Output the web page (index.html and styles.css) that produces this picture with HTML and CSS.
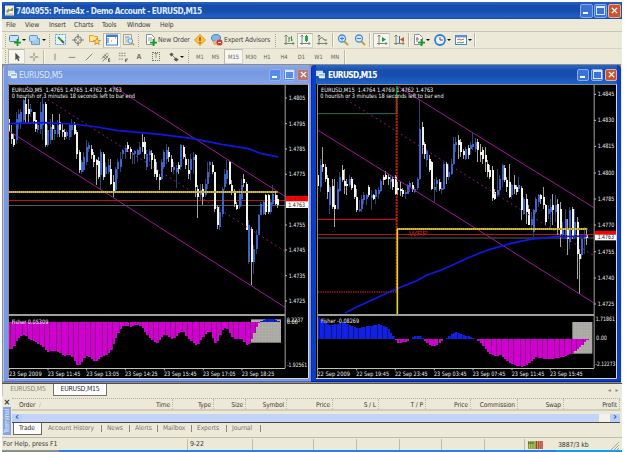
FILE: index.html
```html
<!DOCTYPE html>
<html lang="en">
<head>
<meta charset="utf-8">
<title>7404955: Prime4x - Demo Account - EURUSD,M15</title>
<link rel="stylesheet" href="styles.css">
</head>
<body>
<svg class="defs" width="0" height="0">
  <defs>
    <pattern id="gold" width="6" height="6" patternUnits="userSpaceOnUse"><rect width="6" height="6" fill="#d9c32e"/><rect width="3" height="6" fill="#ad9c28"/></pattern>
    <pattern id="dots" width="9" height="9" patternUnits="userSpaceOnUse"><rect width="9" height="9" fill="#aaa9a3"/><rect x="3" y="3" width="3" height="3" fill="#b8b6ac"/></pattern>
    <symbol id="plus" viewBox="0 0 8 8"><path d="M3 0h2v3h3v2H5v3H3V5H0V3h3z" fill="#189a20"/></symbol>
    <symbol id="win" viewBox="0 0 12 12"><rect x=".5" y="1.5" width="8" height="6" fill="#bcd8f5" stroke="#e8f2ff"/><path d="M3.5 4.500h8v6h-7z" fill="#dceaff" stroke="#fff"/><path d="M4 6.500h7" stroke="#3f75cf"/></symbol>
    <symbol id="axes" viewBox="0 0 12 12"><path d="M3 1v10M1 9.500h10M1.500 2.500 3 1l1.500 1.500M9.500 8l1.500 1.500L9.500 11" fill="none" stroke="#6d7a72" stroke-width=".9"/></symbol>
    <symbol id="lens" viewBox="0 0 12 12"><path d="m7 7 4 4" stroke="#c9a034" stroke-width="2"/><circle cx="5" cy="4.500" r="3.500" fill="#d5eafb" stroke="#4c8fdb" stroke-width="1.300"/></symbol>
  </defs>
</svg>
<div class="app">
  <header class="titlebar">
    <svg class="logo" viewBox="0 0 10 11"><rect width="10" height="11" fill="#f4f2dc"/><path d="M1 7 4 3l1 2 4-3v4H5L3 8z" fill="#889279"/><path d="M1 9.500h8" stroke="#bba963"/></svg>
    <h1>7404955: Prime4x - Demo Account - EURUSD,M15</h1>
    <div class="controls"><i class="min"></i><i class="max"></i><i class="close"><svg viewBox="0 0 8 8"><path d="m1 1 6 6M7 1 1 7"/></svg></i></div>
  </header>
  <nav class="menu"><span>File</span><span>View</span><span>Insert</span><span>Charts</span><span>Tools</span><span>Window</span><span>Help</span></nav>

  <div class="toolbar main">
    <i class="grip"></i>
    <b class="drop"><svg viewBox="0 0 12 12"><rect x=".5" y="1.500" width="9" height="6" rx="1" fill="#cce2fa" stroke="#4c83c4"/><use href="#plus" x="5" y="5" width="7" height="7"/></svg></b>
    <b class="drop"><svg viewBox="0 0 12 12"><rect x=".5" y="1.500" width="8" height="6" rx="1" fill="#b8d8f5" stroke="#5b93cf"/><path d="M2.500 8v2.500h8V4.500H9" fill="#a0c9ee" stroke="#6b9cce"/></svg></b>
    <i class="grip"></i>
    <b><svg viewBox="0 0 12 12"><rect x=".5" y=".5" width="10" height="10" fill="#e8f4fb" stroke="#5aa0d4" stroke-dasharray="2 1"/><path d="m3 3 3 3" stroke="#2ba82e" stroke-width="2"/><path d="m6 6 3 3" stroke="#4b6046" stroke-width="2"/></svg></b>
    <b><svg viewBox="0 0 12 12"><circle cx="6" cy="6" r="3.500" fill="none" stroke="#777b74"/><path d="M6 0v5M6 7v5M0 6h5M7 6h5" stroke="#777b74"/></svg></b>
    <b><svg viewBox="0 0 12 12"><path d="M.5 1.500h4l1 1h3v5h-8z" fill="#ffe68b" stroke="#d3a23e"/><path d="m8 4 1 2.300 2.500.2-2 1.500.7 2.500L8 9.200l-2.200 1.300.7-2.500-2-1.500L7 6.300z" fill="#ffd84f" stroke="#c8882a" stroke-width=".8"/></svg></b>
    <b class="pressed"><svg viewBox="0 0 12 12"><rect x=".5" y="1" width="11" height="10" fill="#fff" stroke="#437ccb"/><path d="M1 2h10" stroke="#437ccb" stroke-width="2"/><path d="M2 4v5" stroke="#8fb6e8" stroke-width="2"/><path d="M9 4h1M5 7h1" stroke="#d26c55"/></svg></b>
    <b><svg viewBox="0 0 12 12"><path d="M.5.5h8v10h-8z" fill="#f3f1e2" stroke="#a4a18c"/><path d="M2 3h5M3 2v7M5 2v7" stroke="#809cb9" stroke-width=".7"/><use href="#lens" x="4" y="4" width="8" height="8"/></svg></b>
    <i class="grip"></i>
    <b class="label"><svg viewBox="0 0 12 12"><path d="M1.500.5h5l3 3v7h-8z" fill="#fff" stroke="#87939a"/><path d="M3 4h4M3 6h4" stroke="#999"/><use href="#plus" x="5" y="5" width="7" height="7"/></svg><span class="order-label">New Order</span></b>
    <b><svg viewBox="0 0 12 12"><path d="m6 .5 5.500 5.500L6 11.500.5 6z" fill="#f6c043" stroke="#dc9a2b"/><path d="M6 3v4M6 8v1.500" stroke="#9a5510" stroke-width="1.500"/></svg></b>
    <b class="label"><svg viewBox="0 0 12 12"><ellipse cx="5" cy="4" rx="4.500" ry="3.500" fill="#82b6e9" stroke="#4a82c1"/><path d="M1 7h9l-2 4H3z" fill="#e9ba54"/><circle cx="8.500" cy="8.500" r="3" fill="#d63a2e"/><path d="M7 8.500h3" stroke="#fff"/></svg><span class="expert-label">Expert Advisors</span></b>
    <i class="grip"></i>
    <b><svg viewBox="0 0 12 12"><use href="#axes"/><path d="M6 3v5M6 4h1.500M8.500 2v5M8.500 6H10" stroke="#4b8a5c"/></svg></b>
    <b class="pressed"><svg viewBox="0 0 12 12"><use href="#axes"/><path d="M7.500 1v7" stroke="#27793c"/><path d="M6 2h3v5H6z" fill="#2ba64a"/></svg></b>
    <b><svg viewBox="0 0 12 12"><use href="#axes"/><path d="M3 6c3-4 4-2 5 0h3" fill="none" stroke="#56665e"/></svg></b>
    <i class="sep"></i>
    <b><svg viewBox="0 0 12 12"><use href="#lens"/><path d="M3 4.500h4M5 2.500v4" stroke="#397bc8"/></svg></b>
    <b><svg viewBox="0 0 12 12"><use href="#lens"/><path d="M3 4.500h4" stroke="#397bc8"/></svg></b>
    <i class="sep"></i>
    <b class="pressed"><svg viewBox="0 0 12 12"><use href="#axes"/><path d="m6 3 4 2.500L6 8z" fill="#209547"/></svg></b>
    <b><svg viewBox="0 0 12 12"><use href="#axes"/><path d="M6.500 2v7" stroke="#3878b8"/><path d="m11 3-4 2.500L11 8z" fill="#ce4e31"/></svg></b>
    <i class="sep"></i>
    <b class="drop"><svg viewBox="0 0 12 12"><path d="M1.500.5h5l3 3v7h-8z" fill="#fff" stroke="#87939a"/><path d="M4 3v5M3 5h3" stroke="#777"/><use href="#plus" x="5" y="5" width="7" height="7"/></svg></b>
    <b class="drop"><svg viewBox="0 0 12 12"><circle cx="6" cy="6" r="5" fill="#e6f3ff" stroke="#367cd1" stroke-width="1.800"/><path d="M6 3v3h3" fill="none" stroke="#555"/></svg></b>
    <b class="drop"><svg viewBox="0 0 12 12"><rect x=".5" y="1.500" width="11" height="9" fill="#fff" stroke="#4d88c9"/><path d="M1 2.500h10" stroke="#5c99dc" stroke-width="2"/><path d="m2 6 2-1 2 1 3-1" fill="none" stroke="#bd624c"/><path d="m2 9 2-1 2 1 3-1" fill="none" stroke="#52995b"/></svg></b>
    <i class="sep"></i>
  </div>

  <div class="toolbar draw">
    <i class="grip"></i>
    <b class="pressed"><svg viewBox="0 0 12 12"><path d="M4 1v9l2-2 1.500 3 1.500-1-1.500-3H10z" fill="#4f4f4c"/></svg></b>
    <b><svg viewBox="0 0 12 12"><path d="M6 1v4M6 7v4M1 6h4M7 6h4" stroke="#696964"/></svg></b>
    <i class="sep"></i>
    <b><svg viewBox="0 0 12 12"><path d="M6 2v8" stroke="#777770"/></svg></b>
    <b><svg viewBox="0 0 12 12"><path d="M2 6.500h8" stroke="#777770"/></svg></b>
    <b><svg viewBox="0 0 12 12"><path d="m2 10 8-8" stroke="#777770"/></svg></b>
    <b><svg viewBox="0 0 12 12"><path d="m1 8 7-7M2 11l7-7M2 5l5 4M4 3l4 4" stroke="#66665f"/><path d="M11 8H9v3.500h2M9 9.700h2" fill="none" stroke="#555"/></svg></b>
    <b><svg viewBox="0 0 12 12"><path d="M1 1.500h9M1 4.500h9M1 8.500h6" stroke="#73736c" stroke-dasharray="2 1"/><path d="M9 12V8.500h3M9 10.500h2" fill="none" stroke="#555"/></svg></b>
    <b class="letter">A</b>
    <b><span class="textbox">T</span></b>
    <b class="drop"><svg viewBox="0 0 12 12"><path d="m1 3 2-2 2 2-2 2zM4 4l4 4M6 9l2-2 3 2-2 2z" fill="#555" stroke="#555" stroke-width=".8"/></svg></b>
    <i class="grip"></i>
    <b>M1</b><b>M5</b><b class="pressed">M15</b><b>M30</b><b>H1</b><b>H4</b><b>D1</b><b>W1</b><b>MN</b>
    <i class="sep"></i>
  </div>

  <main class="workspace">
    <section class="chart-window inactive">
      <div class="chart-title"><svg viewBox="0 0 12 12"><use href="#win"/></svg><h2>EURUSD,M5</h2><div class="controls"><i class="min"></i><i class="max"></i><i class="close"><svg viewBox="0 0 8 8"><path d="m1 1 6 6M7 1 1 7"/></svg></i></div></div>
      <svg class="chart" id="m5" viewBox="24 66 903 885"></svg>
    </section>
    <section class="chart-window active">
      <div class="chart-title"><svg viewBox="0 0 12 12"><use href="#win"/></svg><h2>EURUSD,M15</h2><div class="controls"><i class="min"></i><i class="max"></i><i class="close"><svg viewBox="0 0 8 8"><path d="m1 1 6 6M7 1 1 7"/></svg></i></div></div>
      <svg class="chart" id="m15" viewBox="18 66 903 885"></svg>
    </section>
  </main>

  <div class="chart-tabs"><span>EURUSD,M5</span><span class="on">EURUSD,M15</span><em>◂</em><em>▸</em></div>

  <section class="terminal">
    <aside><span class="x">×</span><span class="name">Terminal</span></aside>
    <div class="panel">
      <div class="columns"><span>Order &nbsp;<small>∕</small></span><span>Time</span><span>Type</span><span>Size</span><span>Symbol</span><span>Price</span><span>S / L</span><span>T / P</span><span>Price</span><span>Commission</span><span>Swap</span><span>Profit</span></div>
      <div class="scroll"><i>‹</i><span></span><i>›</i></div>
      <div class="panel-tabs"><span class="on">Trade</span><span>Account History</span><span>News</span><span>Alerts</span><span>Mailbox</span><span>Experts</span><span>Journal</span></div>
    </div>
  </section>

  <footer class="status">
    <span>For Help, press F1</span><span>9-22</span><span></span><span></span><span></span><span></span><span></span><span></span>
    <span class="traffic"><svg viewBox="0 0 15 8"><path d="M0 4h8" stroke="#7c9a23" stroke-width="8" stroke-dasharray="1.500 .6"/><path d="M8 4h7" stroke="#ad3b20" stroke-width="8" stroke-dasharray="1.500 .6"/><path d="M0 2h6" stroke="#4c5b16"/></svg>3887/3 kb</span>
    <svg class="resize" viewBox="0 0 8 8"><path d="M0 8 8 0M3 8l5-5M6 8l2-2" stroke="#aaa696"/></svg>
  </footer>
</div>
<div class="desktop"><i></i><i></i><i></i></div>
<script src="charts.js"></script>
</body>
</html>
```
FILE: styles.css
```css
* { box-sizing: border-box; }
body { margin: 0; width: 625px; height: 452px; overflow: hidden; background: #fff; font: 6.6px "DejaVu Sans Condensed", "Noto Sans", sans-serif; color: #3c3b36; }
h1, h2 { margin: 0; font-weight: normal; }
i, em, b { font-style: normal; font-weight: normal; }
.defs { display: block; height: 0; }
.app { margin: 2px 3px 0 2px; width: 620px; height: 448px; display: flex; flex-direction: column; background: #ece9d8; white-space: nowrap; }

.titlebar { height: 17px; display: flex; align-items: center; padding: 0 1px 0 3px; color: #fff; background: linear-gradient(#2b66c5, #174eae 20%, #174eae 55%, #2260c4 85%, #174ba6); }
.logo { width: 9px; height: 11px; }
.titlebar h1 { margin-left: 2px; font: bold 8.3px "DejaVu Sans Condensed", sans-serif; letter-spacing: -.53px; color: #dfe9ff; }
.controls { display: flex; gap: 2px; margin-left: auto; }
.controls i { width: 12px; height: 12px; border: 1px solid #86abeb; border-radius: 2px; background: #3b72d8; display: flex; align-items: center; justify-content: center; }
.titlebar .controls i { height: 14px; width: 13px; }
.titlebar .controls { gap: 1px; }
.min::after { content: ""; width: 5px; height: 2px; background: #fff; margin: 5px 2px 0 0; }
.max::after { content: ""; width: 7px; height: 6px; border: 1px solid #dce8ff; border-top-width: 2px; }
.controls .close { background: #cc5330; border-color: #e0b0a0; }
.close svg { width: 7px; height: 7px; stroke: #fff; stroke-width: 1.6; }

.menu { height: 12px; display: flex; align-items: center; padding-left: 4px; font-size: 6.9px; letter-spacing: -.15px; }
.menu span:nth-child(1) { width: 19px; }
.menu span:nth-child(2) { width: 24px; }
.menu span:nth-child(3) { width: 25px; }
.menu span:nth-child(4) { width: 28px; }
.menu span:nth-child(5) { width: 25px; }
.menu span:nth-child(6) { width: 33px; }

.toolbar { display: grid; padding-left: 2px; height: 16px; align-items: center; border-top: 1px solid #c9c5b2; }
.main { height: 17px; grid-template-columns: 4px 19px 21px 4px 18px 16px 17px 18px 16px 5px 50px 16px 66px 6px 17px 16px 18px 4px 16px 17px 5px 17px 17px 4px 20px 22px 20px 4px; }
.draw { border-top-color: #d8d4c3; font-size: 5.8px; color: #66655e; grid-template-columns: 4px 17px 17px 4px 17px 17px 17px 17px 17px 16px 18px 22px 6px 14px 17px 19px 16px 16px 18px 17px 17px 16px 3px; }
.toolbar b { height: 15px; display: flex; align-items: center; justify-content: center; }
.toolbar b > svg { width: 12px; height: 12px; flex: none; }
.draw b > svg { width: 10px; height: 10px; }
.toolbar .grip { height: 13px; width: 2px; margin-left: 1px; border-left: 1px dotted #aaa692; }
.toolbar .sep { height: 14px; width: 2px; margin-left: 1px; border-left: 1px solid #bdb9a6; border-right: 1px solid #faf8ee; }
.toolbar .pressed { background: #f6f5ef; border: 1px solid #d6d3c5; border-top-color: #bdb9a9; border-left-color: #bdb9a9; }
.drop::after { content: ""; border: 2px solid transparent; border-top-color: #111; border-bottom: 0; margin-left: 1px; }
.toolbar .label { justify-content: flex-start; padding-left: 3px; gap: 1px; color: #45443e; font-size: 6.9px; }
.order-label { letter-spacing: -.15px; }
.expert-label { letter-spacing: -.17px; }
.toolbar .letter { font-size: 7px; font-weight: bold; color: #77756c; }
.textbox { border: 1px dotted #77756c; width: 8px; height: 9px; line-height: 7px; text-align: center; font-size: 7px; }

.workspace { height: 320px; display: flex; padding: 1px 0 0 1px; background: #8c8c86; border-bottom: 1px solid #4f5054; box-shadow: inset -1px 0 #ece9d8; }
.chart-window { width: 308px; padding: 0 2px 2px 4px; height: 317px; border-radius: 4px 4px 0 0; }
.inactive { background: #7a98e3; border-left: 1px solid #b4c6ef; border-bottom: 1px solid #5265c3; }
.active { width: 310px; padding-right: 4px; background: #0b3fc1; border-left: 1px solid #0c27bc; border-bottom: 1px solid #061cb0; }
.chart-title { height: 19px; display: flex; align-items: center; color: #fff; }
.inactive .chart-title { color: #dce7ff; background: linear-gradient(#8ba9ea, #7698e0 35%, #82a4ea); }
.active .chart-title { background: linear-gradient(#2767cd, #174eae 30%, #174eae 55%, #2262cb); }
.chart-title > svg { width: 9px; height: 9px; }
.chart-title h2 { margin-left: 2px; font-size: 8.5px; letter-spacing: -.25px; }
.active h2 { margin-left: 3px; font-size: 8.3px; font-weight: bold; letter-spacing: -.65px; }
.inactive .controls i { border-color: #92b0ef; background: #588aea; }
.inactive .controls .close { background: #b9746d; border-color: #a7a5c9; }
.chart { display: block; width: 301px; height: 295px; background: #000; border: 0; }
.chart text { font-family: "DejaVu Sans Condensed", "Noto Sans", sans-serif; font-size: 18px; fill: #efefef; }
.chart .onwhite { fill: #111; }
.chart .dim { fill: #a01818; }
.chart .pivot { fill: #d3171c; font-family: "Liberation Sans", sans-serif; font-size: 23px; }

.chart-tabs { height: 14px; display: flex; font-size: 6.9px; letter-spacing: -.22px; line-height: 11px; color: #8a887c; }
.chart-tabs span { width: 51px; height: 12px; text-align: center; border-left: 1px solid #c7c4b5; }
.chart-tabs .on { width: 54px; background: #fff; color: #33322e; border: 1px solid #77756b; border-top: 0; }
.chart-tabs em { font-size: 6px; margin-left: 5px; }
.chart-tabs span + em { margin-left: auto; }
.chart-tabs em:last-child { margin-right: 4px; }

.terminal { height: 39px; display: flex; }
aside { width: 10px; display: flex; flex-direction: column; align-items: center; }
.x { height: 9px; line-height: 9px; font-size: 9px; font-weight: bold; color: #333; }
.name { height: 28px; width: 8px; line-height: 8px; writing-mode: vertical-rl; transform: rotate(180deg); background: #83a6df; color: #dce8fb; text-align: center; font-size: 7px; letter-spacing: -.3px; }
.panel { width: 610px; padding-right: 2px; }
.columns { height: 13px; display: grid; grid-template-columns: 59px 102px 41px 32px 41px 46px 46px 47px 45px 47px 46px 56px; line-height: 12px; border-top: 1px dotted #b3b09e; border-bottom: 2px solid #d0cdb9; letter-spacing: -.1px; }
.columns span { text-align: right; padding-right: 2px; height: 10px; border-right: 1px dotted #bdb9a8; }
.columns span:first-child { text-align: left; padding-left: 7px; border-color: transparent; }
.columns small { color: #aaa798; font-size: 6px; }
.scroll { display: flex; height: 9px; margin-top: 3px; border-bottom: 1px solid #4b4a45; background: #c3d4f8; }
.scroll i { width: 10px; line-height: 6px; font-size: 11px; font-weight: bold; text-align: center; color: #3d5da0; background: #bad0fa; }
.scroll span { flex: 1; border-right: 11px solid #f3f2ea; }
.panel-tabs { height: 13px; display: flex; padding-left: 1px; line-height: 11px; letter-spacing: -.07px; color: #77756b; }
.panel-tabs span { border-right: 1px solid #8b897e; height: 7px; margin-top: 2px; line-height: 7px; padding-left: 5px; width: 28px; }
.panel-tabs .on { width: 29px; height: 12px; margin-top: 0; line-height: 10px; background: #fff; color: #33322e; border: 1px solid #6b6961; border-top: 0; }
.panel-tabs span:nth-child(2) { width: 60px; padding-left: 6px; }
.panel-tabs span:nth-child(5) { width: 34px; }
.panel-tabs span:nth-child(6) { width: 35px; }
.panel-tabs span:nth-child(7) { width: 34px; }

.status { height: 13px; display: grid; grid-template-columns: 185px 65px 61px 43px 43px 42px 43px 40px 87px 9px; border-top: 1px solid #c0bcaa; padding-top: 1px; line-height: 10px; font-size: 6.9px; letter-spacing: -.08px; }
.status span { border-left: 1px solid #c0bcaa; padding-left: 2px; }
.status span:first-child { border: 0; padding-left: 1px; }
.status .traffic { display: flex; gap: 15px; align-items: center; }
.traffic svg { width: 15px; height: 8px; margin-left: 1px; }
.resize { width: 8px; height: 8px; align-self: end; }
.desktop { height: 2px; margin-left: 2px; width: 620px; display: flex; background: #2b80e6; }
.desktop i:nth-child(1) { width: 57px; background: #85918c; }
.desktop i:nth-child(2) { width: 497px; }
.desktop i:nth-child(3) { flex: 1; background: #13a0e8; }
```
FILE: charts.js
```javascript
// Chart coordinates are thirds of a pixel. Bars: high, body top, body bottom, low, colour.
const STEP = 7.27;
const snap = v => Math.round(v / 3) * 3;

function bars(text, x0) {
  return text.trim().split(/\s+/).map((bar, i) => {
    const m = bar.match(/^(\d+),(\d+),(\d+),(\d+)([wb])$/);
    const [h, t, b, l] = m.slice(1, 5).map(v => snap(+v));
    const up = m[5] === 'b';
    const x = snap(x0 + i * STEP);
    return `<path d="M${x + 1.5} ${h}V${l}" stroke="${up ? '#2b4670' : '#a5a59e'}" stroke-width="3"/>` +
      `<rect x="${x}" y="${t}" width="6" height="${Math.max(3, b - t)}" fill="${up ? '#3d63cc' : '#f4f4ee'}"/>`;
  }).join('');
}

function histogram(points, x0, zero) {
  let out = '';
  for (let i = 0; i < 112; i++) {
    const x = x0 + i * STEP;
    let k = 0;
    while (k < points.length - 2 && points[k + 1][0] < x) k++;
    const [a, b] = [points[k], points[k + 1]];
    const f = Math.min(1, Math.max(0, (x - a[0]) / (b[0] - a[0])));
    const y = snap(a[1] + (b[1] - a[1]) * f);
    const up = y < zero;
    out += `<rect x="${snap(x)}" y="${Math.min(y, zero)}" width="6" height="${Math.abs(y - zero)}" fill="${up ? '#1220e0' : '#d000d0'}"/>`;
    if (snap(x + STEP) - snap(x) > 6) {
      out += `<rect x="${snap(x) + 6}" y="${Math.min(y, zero)}" width="3" height="${Math.abs(y - zero)}" fill="${up ? '#0a1290' : '#8a1684'}"/>`;
    }
  }
  return out;
}

const line = (pts, color, w = 3, extra = '') => `<polyline points="${pts}" fill="none" stroke="${color}" stroke-width="${w}" ${extra}/>`;
const text = (x, y, s, w, cls = '') => `<text x="${x}" y="${y + 6}" ${w ? `textLength="${w}" lengthAdjust="spacingAndGlyphs"` : ''} class="${cls}">${s}</text>`;
const dash = 'stroke-dasharray="5 10"';

function frame(x, right, bottomLabels, prices) {
  let out = line(`${x - 1.5},951 ${x - 1.5},67.5 ${x + 900},67.5`, '#8e8e88');
  out += line(`${right + .5},69 ${right + .5},919`, '#a0a09a');
  out += `<rect x="${x}" y="756" width="${right - x}" height="6" fill="#a0a09a"/>`;
  out += line(`${x},919.5 ${right},919.5`, '#c0c0ba');
  prices.forEach(([y, s]) => { out += line(`${right},${y} ${right + 6},${y}`, '#bbb') + text(right + 11, y, s, 50); });
  bottomLabels.forEach(([lx, s]) => { out += line(`${lx + 1},919 ${lx + 1},925`, '#bbb') + text(lx, 937, s, 98); });
  return out;
}

const m5 = `120,170,210,235w 190,215,232,245w 215,230,248,255w 150,170,235,245b 140,155,185,200b 140,150,180,200b 110,115,175,185b 105,125,155,185w 110,140,155,185w 125,140,150,165b
150,150,178,185w 150,175,200,210w 180,188,205,212b 120,150,200,215b 105,125,190,235b 120,125,248,255w 190,205,250,255b 170,195,235,245b 155,190,200,235w 190,205,215,235b
175,190,215,225b 155,180,205,225w 185,205,210,225w 200,210,225,235w 205,210,222,232b 185,190,225,235b 170,190,205,225b 180,188,215,220w 205,210,275,290w 265,270,325,333w
295,300,330,335b 270,285,325,330b 235,255,300,310b 240,250,262,270b 250,262,280,290w 270,280,300,315w 290,295,310,370w 285,298,345,350w 260,270,340,380b 270,275,345,355w
300,315,335,345b 290,310,330,335b 290,320,365,370w 340,360,390,405w 315,320,385,392b 290,300,320,350b 270,290,315,330b 260,265,275,290b 250,258,270,290b 240,248,260,270w
255,262,270,290w 270,272,278,305b 265,268,275,305b 260,265,280,300b 240,255,275,280b 215,240,255,270w 225,240,275,290w 265,275,315,325b 260,268,280,300b 265,272,295,320w
280,290,335,345w 300,325,345,355w 335,345,355,385w 290,300,350,355b 265,270,315,320b 245,265,290,305b 255,270,285,300w 280,290,315,330w 300,315,325,335b 310,318,330,378b
300,310,320,335w 245,250,315,325b 248,255,285,290w 275,290,310,320w 290,325,335,350w 275,290,325,355b 270,285,295,335b 275,278,375,405w 370,380,405,468w 365,385,400,415b
365,380,405,430w 350,365,400,405b 300,330,365,380b 298,300,310,345b 300,308,330,335w 330,330,440,450w 430,435,490,500w 430,450,495,505b 375,380,455,465b 320,335,375,385b
295,325,350,365b 298,300,365,370w 355,370,390,400w 380,390,425,435w 420,428,440,445w 380,395,435,440b 350,370,410,430b 335,352,362,375w 360,366,505,505w 475,490,600,605b
495,500,600,670w 550,560,600,635b 505,520,560,575b 455,460,520,520b 420,425,460,460b 415,420,455,460b 395,400,450,460w 395,400,450,455w 410,420,450,455b 370,395,425,430b
390,400,425,430w 400,412,430,437w`;

const m15 = `310,340,372,380w 290,310,375,390b 255,305,315,330w 305,315,350,360w 340,348,390,410w 370,375,430,455b 350,372,435,440w 350,430,440,495w 360,380,440,445b 330,345,388,390b
308,325,355,360w 320,358,372,395w 350,365,372,400w 340,352,368,375b 345,352,378,385w 365,370,405,410w 380,405,445,450w 415,440,446,450b 400,410,440,450b 390,400,415,425b
395,400,410,430b 370,375,400,405w 385,400,408,445b 395,400,412,415w 380,385,405,425b 375,385,395,410b 350,358,388,390b 340,345,355,370w 328,338,350,355w 335,346,352,370w
340,350,360,380b 345,350,375,385w 340,345,395,400w 360,378,385,400w 360,380,388,402w 378,385,395,405w 385,390,395,410b 365,370,395,395b 358,362,375,390b 360,368,385,390w
375,380,390,392b 345,350,378,385b 115,200,350,355b 180,195,250,275w 240,245,275,290w 260,268,295,315b 280,290,325,330w 298,300,380,385w 350,375,385,420b 345,355,365,390b
350,360,380,388w 360,378,385,395b 300,305,380,385b 300,305,345,365w 310,330,345,355b 290,305,335,340b 225,245,305,310b 225,240,250,270b 220,235,250,290w 232,240,270,285w
260,268,280,290w 255,262,290,295b 250,258,280,290w 240,250,262,275b 212,245,255,265b 228,240,262,270b 232,240,265,300w 245,270,280,300w 255,265,290,305w 255,280,300,330w
295,305,330,345w 310,325,345,350w 312,325,408,418w 380,390,410,415w 320,385,400,405b 340,350,385,400b 305,310,355,375b 308,318,355,360w 345,355,375,390w 305,360,405,408w
365,370,400,410b 340,370,380,395w 368,375,390,400w 345,370,382,390b 372,378,445,475w 405,410,455,460b 395,410,450,485w 430,440,490,490w 450,470,490,500b 440,445,510,525b
405,410,450,455b 395,400,420,435b 395,398,410,425w 375,405,430,440w 425,430,480,490w 430,440,455,470b 410,435,450,500b 395,430,445,490w 400,430,450,480b 410,425,500,520w
420,440,515,555w 480,500,520,530b 440,470,520,530b 470,500,530,580w 435,445,540,560b 435,440,525,530w 440,480,520,530b 465,480,575,650w 560,575,590,697w 520,530,580,590b
495,520,530,575b 497,520,527,550w`;

const fisher5 = [[28,861],[36,859],[43,844],[50,831],[65,819],[72,819],[87,834],[123,849],[137,869],[166,867],[188,881],[210,879],[232,914],[239,907],[253,884],[261,883],[283,901],[297,887],[319,879],[333,859],[348,821],[362,797],[370,791],[391,795],[406,789],[420,791],[442,824],[464,842],[471,842],[479,829],[494,816],[515,834],[537,809],[552,811],[559,829],[588,851],[603,829],[617,811],[631,811],[638,837],[646,847],[660,814],[668,799],[675,795],[697,831],[726,832],[740,854],[755,824],[769,789],[776,781],[783,774],[798,771],[815,771],[836,777]];
const fisher15 = [[25,764],[32,774],[45,784],[60,789],[97,781],[120,791],[140,799],[160,794],[206,787],[220,792],[235,804],[243,819],[250,826],[257,837],[264,845],[290,837],[298,832],[301,827],[322,820],[332,826],[340,835],[352,847],[366,853],[380,847],[395,836],[405,829],[417,821],[430,811],[440,811],[455,819],[475,823],[487,827],[499,833],[515,851],[535,874],[555,882],[570,879],[590,899],[615,911],[635,914],[655,904],[675,886],[705,891],[740,889],[765,881],[785,874],[810,854],[825,837],[832,832]];

document.getElementById('m5').innerHTML =
  line('27,415.5 855,415.5', '#b51414') + line('27,430.5 855,430.5', '#555c60') +
  `<g shape-rendering="crispEdges">${bars(m5, 25)}</g>` +
  line('338,72 855,403', '#a0189c') + line('80,72 855,568', '#a0189c', 3, dash) + line('27,207 465,487 855,736', '#a0189c') +
  line('27,185 130,182 220,186 290,195 350,205 480,217 575,229 665,247 745,260 785,275 835,285', '#1018e8', 5) +
  '<rect x="27" y="387" width="806" height="6" fill="url(#gold)"/>' +
  '<rect x="753" y="772" width="90" height="70" fill="url(#dots)"/>' +
  `<g shape-rendering="crispEdges">${histogram(fisher5, 25, 780)}</g>` +
  frame(27, 855, [[27, '23 Sep 2009'], [143, '23 Sep 11:45'], [259, '23 Sep 13:05'], [375, '23 Sep 14:25'], [492, '23 Sep 15:45'], [609, '23 Sep 17:05'], [725, '23 Sep 18:25']],
    [[108, '1.4805'], [185, '1.4795'], [261, '1.4785'], [337, '1.4775'], [489, '1.4755'], [564, '1.4745'], [641, '1.4735'], [717, '1.4725']]) +
  '<rect x="858" y="402" width="66" height="17" fill="#f00"/><rect x="858" y="418" width="66" height="20" fill="#fff"/>' +
  text(865, 411, '1.4765', 50, 'dim') + text(865, 428, '1.4763', 50, 'onwhite') +
  text(35, 84, 'EURUSD,M5&#160; 1.4765 1.4765 1.4762 1.4763', 330) + text(35, 102, '0 hourish or 3 minutes 18 seconds left to bar end', 370) +
  text(35, 779, 'Fisher 0.05309', 110) + text(860, 773, '0.2237', 50) + text(860, 781, '0.00', 34) + text(861, 908, '-1.92561', 60) +
  line('925.5,67 925.5,949.5 24,949.5', '#d8d8d2');

document.getElementById('m15').innerHTML =
  line('24,517.5 852,517.5', '#b51414') + line('24,528 852,528', '#555c60') +
  line('24,155 260,155', '#2a6d5d') + line('260,72 260,155', '#168027', 5) +
  line('24,472 260,472', '#b51822', 4) + line('24,690 260,690', '#b51822', 4, 'stroke-dasharray="4 3"') +
  line('260,105 260,690', '#c42018', 6, 'stroke-dasharray="7 2"') +
  `<g shape-rendering="crispEdges">${bars(m15, 22)}</g>` +
  line('262,72 465,198 852,437', '#a0189c') + line('45,72 465,338 850,580', '#a0189c', 3, dash) + line('24,205 465,479 852,723', '#a0189c') +
  line('105,753 140,735 250,685 320,656 350,640 400,622 465,592 500,577 540,562 600,545 660,532 740,524 832,522', '#1018e8', 5) +
  '<rect x="261" y="498" width="571" height="6" fill="url(#gold)"/>' + line('262,500 262,756', '#e6d51f', 5) +
  text(297, 516, 'WPP', 56, 'pivot') +
  '<rect x="787" y="780" width="60" height="95" fill="url(#dots)"/>' +
  `<g shape-rendering="crispEdges">${histogram(fisher15, 22, 831)}</g>` +
  frame(24, 852, [[22, '22 Sep 2009'], [139, '22 Sep 19:45'], [255, '22 Sep 23:45'], [372, '23 Sep 03:45'], [488, '23 Sep 07:45'], [605, '23 Sep 11:45'], [720, '23 Sep 15:45']],
    [[97, '1.4845'], [175, '1.4830'], [253, '1.4815'], [333, '1.4800'], [411, '1.4785'], [489, '1.4770'], [569, '1.4755'], [648, '1.4740'], [726, '1.4725']]) +
  '<rect x="855" y="507" width="65" height="12" fill="#f00"/><rect x="855" y="518" width="65" height="17" fill="#fff"/>' +
  text(863, 526, '1.4763', 49, 'onwhite') +
  text(33, 84, 'EURUSD,M15&#160; 1.4764 1.4769 1.4762 1.4763', 337) + text(31, 102, '0 hourish or 3 minutes 18 seconds left to bar end', 370) +
  text(33, 776, 'Fisher -0.08269', 114) + text(857, 771, '1.71861', 58) + text(858, 829, '0.00', 33) + text(856, 907, '-2.12273', 60) +
  line('919.5,67 919.5,949.5 18,949.5', '#d8d8d2');
```
